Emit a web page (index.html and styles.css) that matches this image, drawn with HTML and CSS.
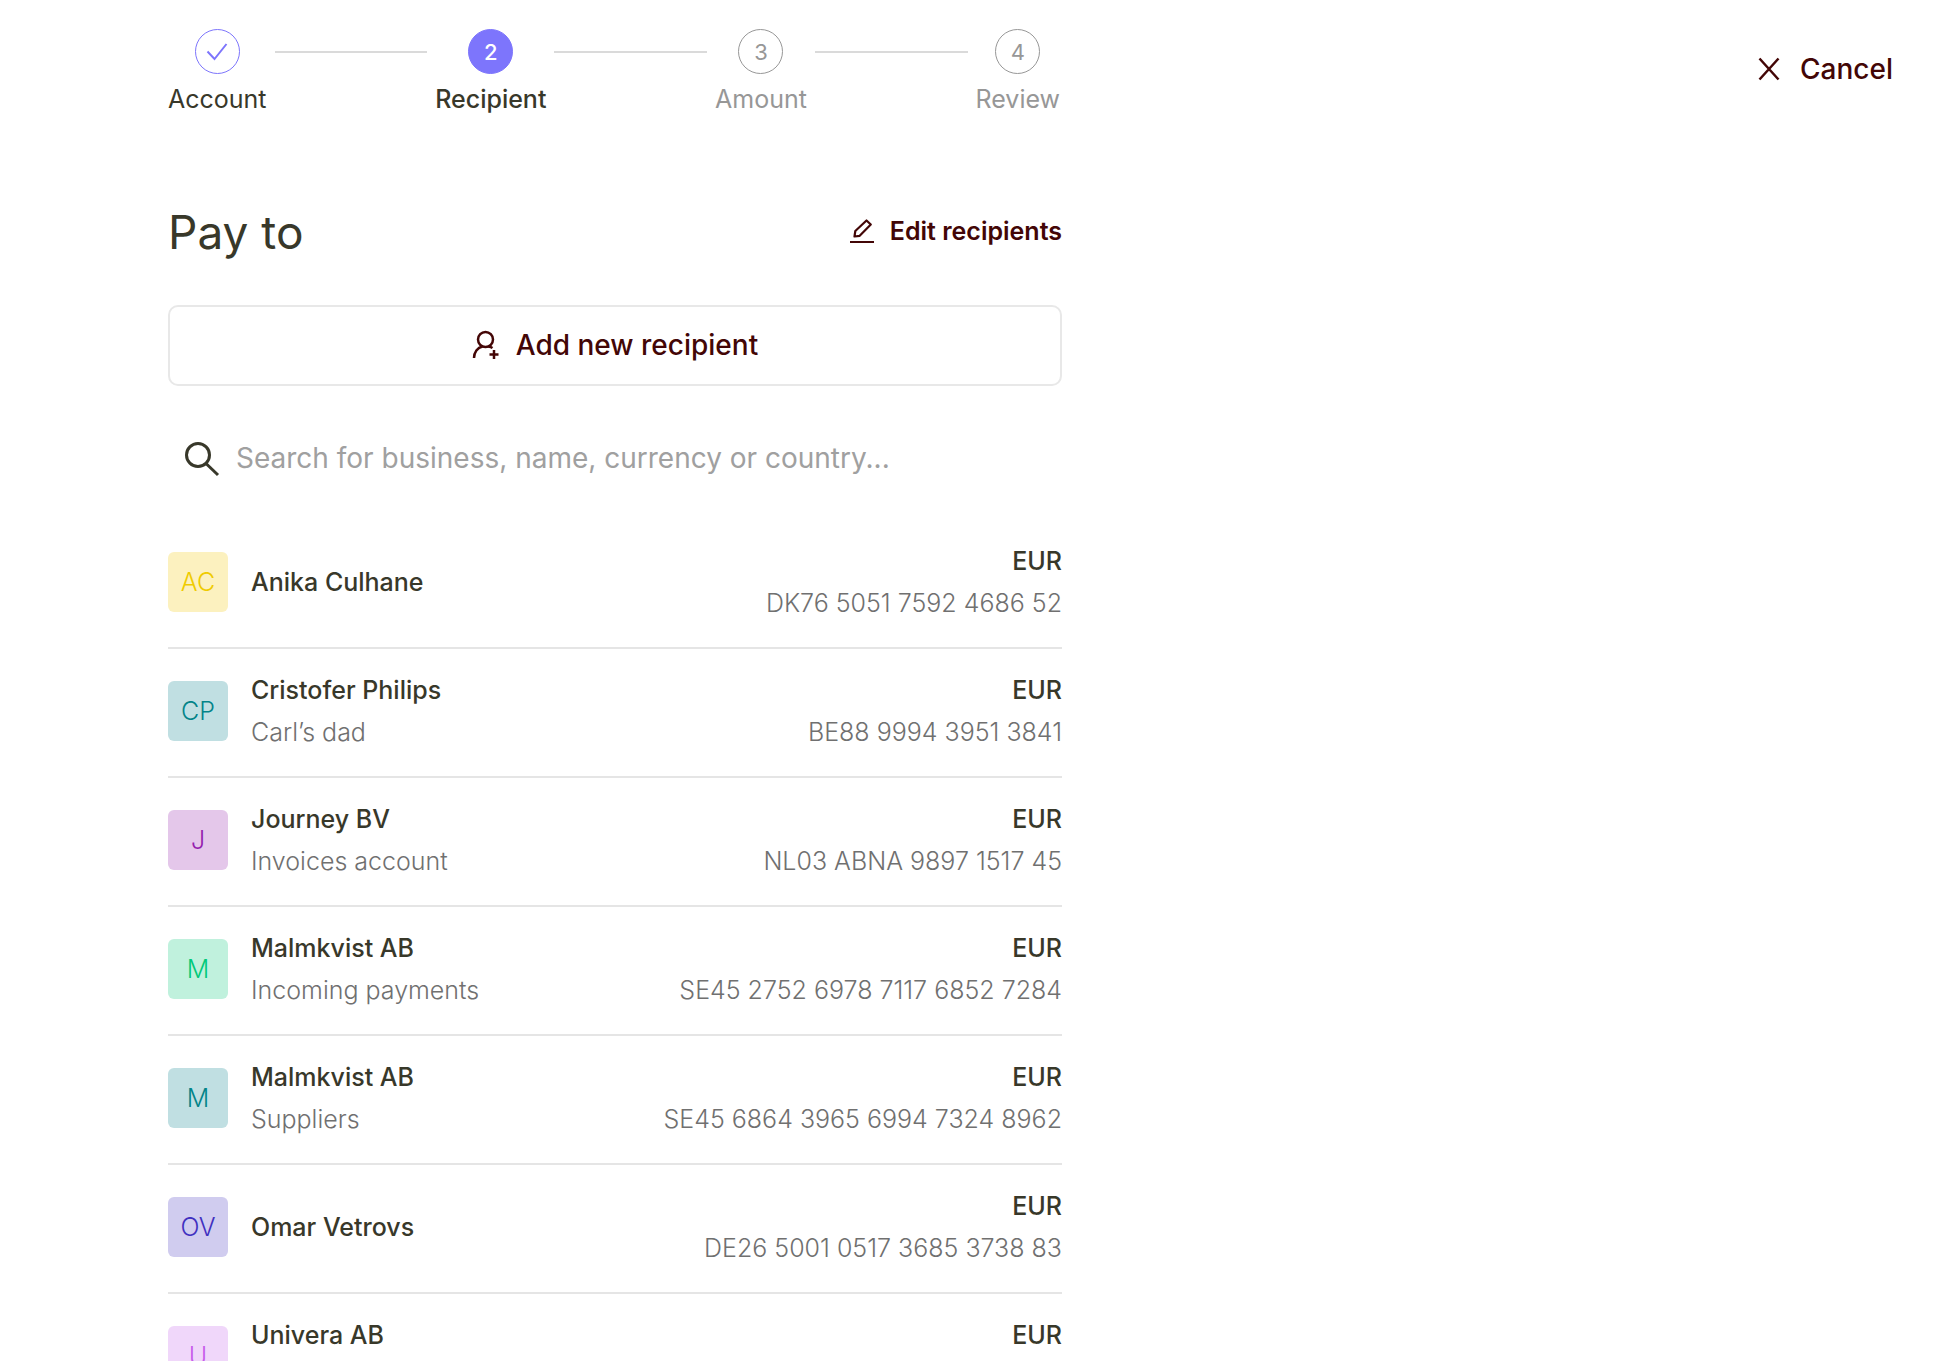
FILE: index.html
```html
<!DOCTYPE html>
<html lang="en">
<head>
<meta charset="utf-8">
<meta name="viewport" content="width=device-width, initial-scale=1">
<title>Pay to</title>
<link rel="stylesheet" href="styles.css">
</head>
<body>
<div class="page">
  <main class="flow">
    <ol class="steps">
      <li class="step step-done">
        <span class="dot"><svg width="22" height="20" viewBox="0 0 22 20" fill="none" stroke="currentColor" stroke-width="2"><path d="M1.500 9.500 8.500 17 20.500 2"/></svg></span>
        <span>Account</span>
      </li>
      <li class="line" aria-hidden="true"></li>
      <li class="step step-current" aria-current="step"><span class="dot">2</span><span>Recipient</span></li>
      <li class="line" aria-hidden="true"></li>
      <li class="step"><span class="dot">3</span><span>Amount</span></li>
      <li class="line" aria-hidden="true"></li>
      <li class="step"><span class="dot">4</span><span>Review</span></li>
    </ol>

    <div class="heading">
      <h1>Pay to</h1>
      <button type="button" class="text-button edit">
        <svg width="26" height="26" viewBox="0 0 26 26" fill="none" stroke="currentColor" stroke-width="2.200" stroke-linejoin="round"><path d="M1 24h24M5.500 18.500 6.300 13 17.500 2.500l4.300 4L10.700 17.800z"/></svg>
        Edit recipients
      </button>
    </div>

    <button type="button" class="add">
      <svg width="28" height="30" viewBox="0 0 28 30" fill="none" stroke="currentColor" stroke-width="2.500"><circle cx="13.500" cy="9.500" r="7.500"/><path d="M2 28C2 22 5.500 17.500 10.500 16.500M16.500 16.500c2 .4 3 .8 4 1.500M22 20v9M17.500 24.500h9"/></svg>
      Add new recipient
    </button>

    <label class="search">
      <svg width="36" height="36" viewBox="0 0 36 36" fill="none" stroke="currentColor" stroke-width="3"><circle cx="14" cy="14" r="11.500"/><path d="M22 22.500 34 34"/></svg>
      <input type="search" aria-label="Search recipients" placeholder="Search for business, name, currency or country...">
    </label>

    <ul class="recipients">
      <li class="recipient">
        <span class="avatar yellow">AC</span>
        <div class="who"><span class="name">Anika Culhane</span></div>
        <div class="account"><span class="name">EUR</span><span class="detail">DK76 5051 7592 4686 52</span></div>
      </li>
      <li class="recipient">
        <span class="avatar teal">CP</span>
        <div class="who"><span class="name">Cristofer Philips</span><span class="detail">Carl’s dad</span></div>
        <div class="account"><span class="name">EUR</span><span class="detail">BE88 9994 3951 3841</span></div>
      </li>
      <li class="recipient">
        <span class="avatar purple">J</span>
        <div class="who"><span class="name">Journey BV</span><span class="detail">Invoices account</span></div>
        <div class="account"><span class="name">EUR</span><span class="detail">NL03 ABNA 9897 1517 45</span></div>
      </li>
      <li class="recipient">
        <span class="avatar green">M</span>
        <div class="who"><span class="name">Malmkvist AB</span><span class="detail">Incoming payments</span></div>
        <div class="account"><span class="name">EUR</span><span class="detail">SE45 2752 6978 7117 6852 7284</span></div>
      </li>
      <li class="recipient">
        <span class="avatar teal">M</span>
        <div class="who"><span class="name">Malmkvist AB</span><span class="detail">Suppliers</span></div>
        <div class="account"><span class="name">EUR</span><span class="detail">SE45 6864 3965 6994 7324 8962</span></div>
      </li>
      <li class="recipient">
        <span class="avatar indigo">OV</span>
        <div class="who"><span class="name">Omar Vetrovs</span></div>
        <div class="account"><span class="name">EUR</span><span class="detail">DE26 5001 0517 3685 3738 83</span></div>
      </li>
      <li class="recipient">
        <span class="avatar pink">U</span>
        <div class="who"><span class="name">Univera AB</span><span class="detail">&nbsp;</span></div>
        <div class="account"><span class="name">EUR</span><span class="detail">&nbsp;</span></div>
      </li>
    </ul>
  </main>

  <button type="button" class="text-button cancel">
    <svg width="22" height="24" viewBox="0 0 22 24" fill="none" stroke="currentColor" stroke-width="2.500"><path d="M1.500 1.500 20.500 22.500M20.500 1.500 1.500 22.500"/></svg>
    Cancel
  </button>
</div>
</body>
</html>
```
FILE: styles.css
```css
* { box-sizing: border-box; }

body {
  margin: 0;
  background: #fff;
  color: #38382a;
  font-family: Inter, "Liberation Sans", sans-serif;
  font-size: 25px;
  line-height: 42px;
}

button, input { font: inherit; color: inherit; }

button {
  display: inline-flex;
  align-items: center;
  background: none;
  border: 0;
  padding: 0;
  color: #430606;
  cursor: pointer;
}

ol, ul { list-style: none; margin: 0; padding: 0; }
svg { flex: none; }

.page {
  display: flex;
  justify-content: space-between;
  align-items: flex-start;
  gap: 32px;
  height: 100vh;
  overflow: hidden;
  padding: 29px 62px 0 168px;
}

.flow { flex: 1; max-width: 894px; }

.steps { display: flex; gap: 8px; padding-right: 2px; }

.step {
  display: flex;
  flex-direction: column;
  align-items: center;
  gap: 4px;
  color: #979797;
}

.dot {
  display: flex;
  align-items: center;
  justify-content: center;
  width: 45px;
  height: 45px;
  border: 1px solid currentColor;
  border-radius: 50%;
  font-size: 22px;
}

.step-done, .step-current { color: #38382a; }
.step-done .dot { color: #7d75fc; }
.step-current { font-weight: 500; }
.step-current .dot { background: #7d75fc; border-color: #7d75fc; color: #fff; }

.line { flex: 1; height: 2px; margin-top: 22px; background: #dadada; }

.heading {
  display: flex;
  justify-content: space-between;
  align-items: center;
  margin-top: 80px;
}

h1 { margin: 0; font-size: 46px; font-weight: 400; line-height: 64px; }

.text-button { gap: 15px; }
.edit { padding-bottom: 2px; font-weight: 600; }
.cancel { gap: 20px; margin-top: 19px; font-size: 28px; font-weight: 500; }

.add {
  justify-content: center;
  gap: 16px;
  width: 100%;
  height: 81px;
  margin-top: 41px;
  padding-bottom: 2px;
  border: 2px solid #e8e8e8;
  border-radius: 10px;
  font-size: 28px;
  font-weight: 500;
}

.search {
  display: flex;
  align-items: center;
  gap: 16px;
  margin-top: 42px;
  padding: 0 16px;
  height: 62px;
}

.search input {
  flex: 1;
  min-width: 0;
  padding: 0 0 2px;
  border: 0;
  outline: 0;
  background: none;
  font-size: 28px;
  font-weight: 400;
}

.search input::placeholder { color: #a0a0a0; opacity: 1; }

.recipients { margin-top: 30px; }

.recipient {
  display: flex;
  align-items: center;
  gap: 23px;
  padding: 20px 0 23px;
  border-bottom: 2px solid #e5e5e5;
}

.avatar {
  flex: none;
  width: 60px;
  border-radius: 6px;
  font-weight: 300;
  line-height: 60px;
  text-align: center;
}

.yellow { background: #fcf1bf; color: #efcb00; }
.teal { background: #c0dfe2; color: #038489; }
.purple { background: #e4c7ea; color: #9420ae; }
.green { background: #c0f1dd; color: #02c97a; }
.indigo { background: #d0ccef; color: #4030c0; }
.pink { background: #f0d7fa; color: #c75ceb; }

.who, .account { display: flex; flex-direction: column; }
.who { flex: 1; }
.account { align-items: flex-end; }
.name { font-weight: 500; }
.detail { color: #707070; font-weight: 300; }
```
